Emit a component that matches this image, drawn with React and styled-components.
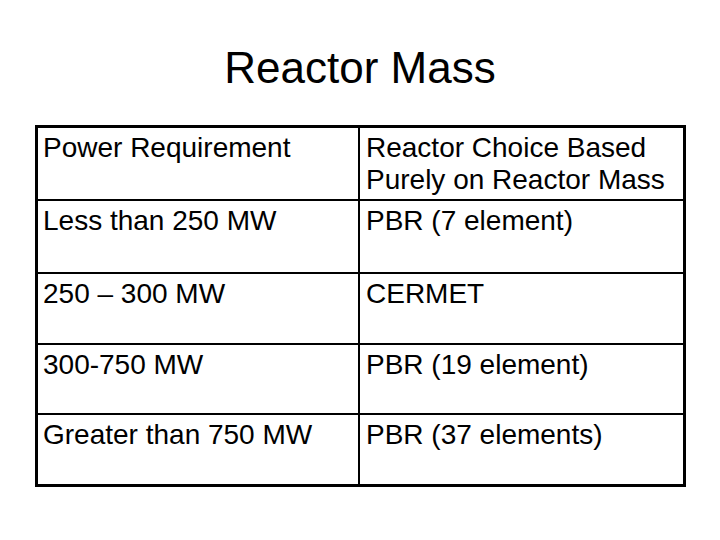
import React from 'react';
import styled, { createGlobalStyle } from 'styled-components';

const Global = createGlobalStyle`
  html, body {
    margin: 0;
    padding: 0;
    background: #fff;
  }
  body {
    font-family: "Liberation Sans", Arial, sans-serif;
    color: #000;
  }
`;

const Slide = styled.div`
  width: 720px;
  height: 540px;
  overflow: hidden;
  display: flex;
  flex-direction: column;
`;

const Title = styled.h1`
  margin: 43px 0 0;
  font-size: 44px;
  font-weight: normal;
  line-height: 50px;
  text-align: center;
`;

const Table = styled.div`
  box-sizing: border-box;
  margin: 32px 0 0 35px;
  width: 651px;
  border: 3px solid #000;
  display: grid;
  grid-template-columns: 322px 1fr;
  grid-template-rows: 71px 73px 71px 70px 71px;
`;

const Cell = styled.div`
  box-sizing: border-box;
  padding: 4px 0 0 ${props => (props.right ? '6px' : '5px')};
  font-size: 28px;
  line-height: 32px;
  border-top: ${props => (props.first ? 'none' : '2px solid #000')};
  border-right: ${props => (props.right ? 'none' : '2px solid #000')};
`;

const rows = [
  ['Less than 250 MW', 'PBR (7 element)'],
  ['250 – 300 MW', 'CERMET'],
  ['300-750 MW', 'PBR (19 element)'],
  ['Greater than 750 MW', 'PBR (37 elements)'],
];

export default function App() {
  return (
    <Slide>
      <Global />
      <Title>Reactor Mass</Title>
      <Table>
        <Cell first>Power Requirement</Cell>
        <Cell first right>
          Reactor Choice Based
          <br />
          Purely on Reactor Mass
        </Cell>
        {rows.map(([a, b]) => (
          <React.Fragment key={a}>
            <Cell>{a}</Cell>
            <Cell right>{b}</Cell>
          </React.Fragment>
        ))}
      </Table>
    </Slide>
  );
}
